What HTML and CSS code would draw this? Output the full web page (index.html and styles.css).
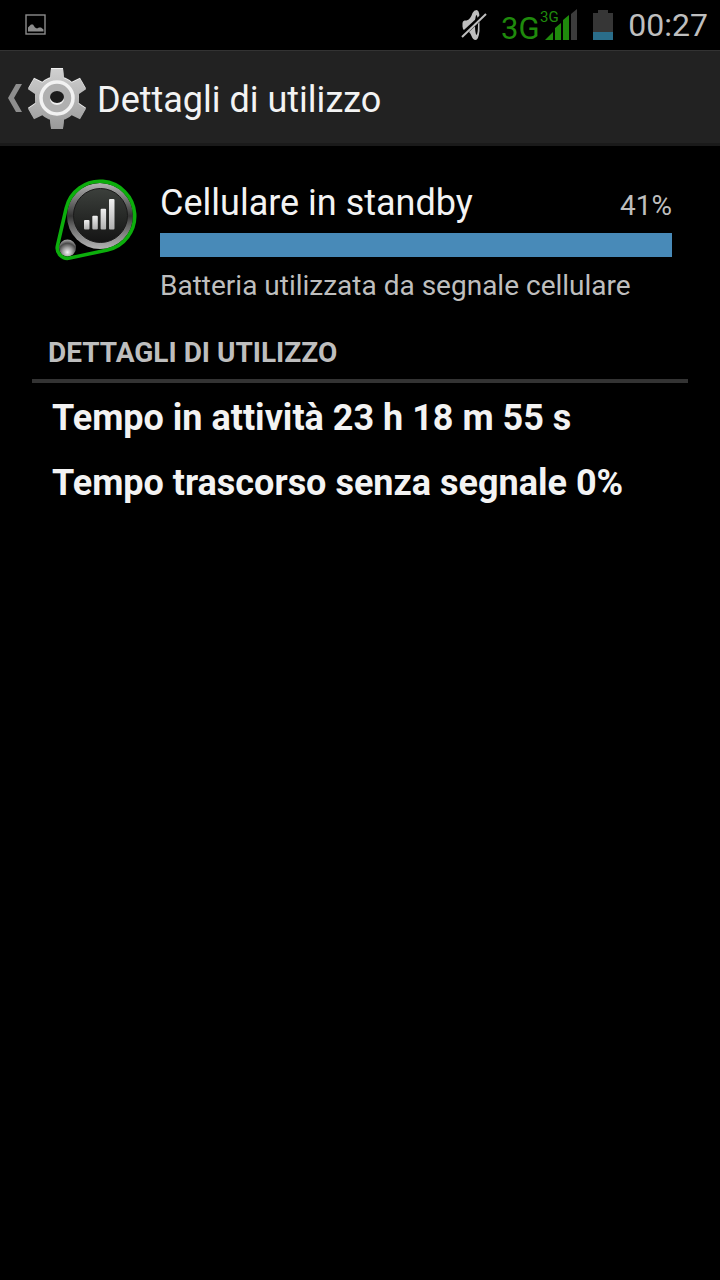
FILE: index.html
```
<!DOCTYPE html>
<html lang="it">
<head>
    <meta charset="UTF-8">
    <meta name="viewport" content="width=device-width, initial-scale=1.0">
    <title>Dettagli di utilizzo</title>
    <link rel="stylesheet" href="styles.css">
</head>
<body>
<div class="status-bar">
    <svg class="status-picture" width="22" height="22" viewBox="0 0 22 22">
        <rect x="1" y="1" width="19" height="19" fill="none" stroke="#8c8c8c" stroke-width="1.400"/>
        <path d="M3 17.500v-4l2-2 1-1h2l2 3 2 1 2-1h2l2.500 2v2z" fill="#8c8c8c"/>
    </svg>
    <div class="status-icons">
        <svg class="status-mute" width="26" height="32" viewBox="0 0 26 32">
            <path d="M1.500 14q0-2 2-2.500h2q4-1 6-7.500 1.500-3 4-3 2.500 0 3 6v15q-1 9-4 9-2.500 0-4-4-2-5-5-5.500H3.500q-2-1-2-4z" fill="#bebebe"/>
            <ellipse cx="15.500" cy="16" rx="1.500" ry="10" fill="#000"/>
            <path d="M0 27L25 4" stroke="#000" stroke-width="5"/>
            <path d="M1 28L25 5" stroke="#bebebe" stroke-width="2"/>
        </svg>
        <svg class="status-signal" width="76" height="34" viewBox="0 0 76 34">
            <text class="network-large" x="-1" y="31">3G</text>
            <text class="network-small" x="38" y="14">3G</text>
            <path d="M43 32l8-8v8zM53 32V20l6-5v17zM61 32V12l6-5v25z" fill="#1f8a0c"/>
            <path d="M69 32V6l6-5v31z" fill="#3c3c3c"/>
        </svg>
        <svg class="status-battery" width="20" height="32" viewBox="0 0 20 32">
            <path d="M5 1h10v3h5v19H0V4h5z" fill="#363636"/>
            <path d="M0 23h20v8H0z" fill="#2a6d8a"/>
        </svg>
        <span class="clock">00:27</span>
    </div>
</div>

<header class="action-bar">
    <a class="up-link" href="#" aria-label="Indietro">
        <svg width="14" height="28" viewBox="0 0 14 28">
            <path d="M8 0h6L6 14l8 14H8L0 14z" fill="#8e8e8e"/>
        </svg>
        <svg class="gear" width="64" height="64" viewBox="0 0 64 64">
            <defs>
                <linearGradient id="metal" x1="0" y1="0" x2="0" y2="1">
                    <stop offset="0" stop-color="#d2d2d2"/>
                    <stop offset="1" stop-color="#989898"/>
                </linearGradient>
                <g id="teeth">
                    <path id="tooth" d="M26 2h12l1 12H25z"/>
                    <use href="#tooth" transform="rotate(60 32 32)"/>
                    <use href="#tooth" transform="rotate(120 32 32)"/>
                    <use href="#tooth" transform="rotate(180 32 32)"/>
                    <use href="#tooth" transform="rotate(240 32 32)"/>
                    <use href="#tooth" transform="rotate(300 32 32)"/>
                </g>
                <mask id="cog">
                    <g fill="#fff">
                        <use href="#teeth"/>
                        <circle cx="32" cy="32" r="22"/>
                    </g>
                </mask>
            </defs>
            <rect width="64" height="64" fill="#f0f0f0" mask="url(#cog)"/>
            <g transform="translate(0 1)">
                <rect width="64" height="64" fill="url(#metal)" mask="url(#cog)"/>
            </g>
            <circle cx="32" cy="32" r="16" fill="#b0b0b0" stroke="#f2f2f2" stroke-width="3.500"/>
            <ellipse cx="32" cy="33" rx="7" ry="6" fill="#eee"/>
            <ellipse cx="32" cy="31" rx="7" ry="6" fill="#1c1c1c"/>
        </svg>
    </a>
    <h1>Dettagli di utilizzo</h1>
</header>

<main>
    <section class="summary">
        <svg class="standby-icon" width="96" height="96" viewBox="0 0 96 96">
            <defs>
                <linearGradient id="ring" x1="0" y1="0" x2="0" y2="1">
                    <stop offset="0" stop-color="#b4b4b4"/>
                    <stop offset=".4" stop-color="#505050"/>
                    <stop offset=".5" stop-color="#343434"/>
                    <stop offset=".65" stop-color="#666"/>
                    <stop offset="1" stop-color="#b4b4b4"/>
                </linearGradient>
                <linearGradient id="face" x1="0" y1="0" x2="0" y2="1">
                    <stop offset="0" stop-color="#3c403c"/>
                    <stop offset="1" stop-color="#141414"/>
                </linearGradient>
                <linearGradient id="bars" x1="0" y1="0" x2="0" y2="1">
                    <stop offset="0" stop-color="#f0f0f0"/>
                    <stop offset="1" stop-color="#b0b0b0"/>
                </linearGradient>
                <radialGradient id="knob" cx=".5" cy=".75" r=".7">
                    <stop offset="0" stop-color="#f4f4f4"/>
                    <stop offset=".4" stop-color="#a0a0a0"/>
                    <stop offset=".75" stop-color="#4a4a4a"/>
                    <stop offset="1" stop-color="#999"/>
                </radialGradient>
            </defs>
            <circle cx="52" cy="44" r="33" fill="url(#ring)"/>
            <circle cx="52.500" cy="43.500" r="27" fill="url(#face)" stroke="#1a1a1a"/>
            <g fill="url(#bars)">
                <rect x="36" y="48" width="5.500" height="9.500" rx="1"/>
                <rect x="44.300" y="43.700" width="5.500" height="13.800" rx="1"/>
                <rect x="52.600" y="36.700" width="5.500" height="20.800" rx="1"/>
                <rect x="61" y="27" width="5.500" height="30.500" rx="1"/>
            </g>
            <circle cx="19.500" cy="76" r="8.500" fill="url(#knob)"/>
            <path d="M18.200 36.100A34.700 34.700 0 1 1 59.400 77.900L21.700 86.100A10.300 10.300 0 0 1 9.500 73.700Z" fill="none" stroke="#0cae0c" stroke-width="3.600"/>
        </svg>
        <div class="summary-body">
            <div class="summary-head">
                <h2>Cellulare in standby</h2>
                <span class="percent">41%</span>
            </div>
            <div class="usage-bar"></div>
            <p class="description">Batteria utilizzata da segnale cellulare</p>
        </div>
    </section>

    <section class="details">
        <h3>Dettagli di utilizzo</h3>
        <ul>
            <li>Tempo in attività 23 h 18 m 55 s</li>
            <li>Tempo trascorso senza segnale 0%</li>
        </ul>
    </section>
</main>
</body>
</html>
```
FILE: styles.css
```
body {
    margin: 0;
    min-height: 100vh;
    background-color: #000;
    color: #f3f3f3;
    font-family: Roboto, "Liberation Sans", sans-serif;
}
h1, h2, h3, p, ul {
    margin: 0;
    padding: 0;
    font-weight: normal;
}
svg {
    display: block;
    flex: none;
    overflow: visible;
}
.status-bar {
    display: flex;
    justify-content: space-between;
    align-items: center;
    height: 50px;
    padding: 0 12px 0 25px;
}
.status-icons {
    display: flex;
    align-items: center;
    gap: 15px;
}
.network-large,
.network-small {
    fill: #1f8a0c;
}
.network-large {
    font-size: 31px;
}
.network-small {
    font-size: 15px;
}
.clock {
    font-size: 32px;
    line-height: 50px;
    color: #bebebe;
}
.action-bar {
    display: flex;
    align-items: center;
    box-sizing: border-box;
    height: 96px;
    padding: 2px 0 0 8px;
    background-color: #222;
    border-top: 1px solid #333;
    border-bottom: 3px solid #1a1a1a;
}
.up-link {
    display: flex;
    align-items: center;
}
.gear {
    margin: 0 8px 0 3px;
}
.action-bar h1 {
    padding-top: 4px;
    font-size: 36px;
    line-height: 42px;
}
.summary {
    display: flex;
    gap: 16px;
    padding: 26px 48px 0;
}
.summary-body {
    flex: 1;
    padding-top: 10px;
}
.summary-head {
    display: flex;
    justify-content: space-between;
    align-items: baseline;
}
.summary-head h2 {
    font-size: 36px;
    line-height: 42px;
}
.percent {
    font-size: 28px;
    color: #bebebe;
}
.usage-bar {
    height: 24px;
    margin: 9px 0 12px;
    background-color: #488ab8;
}
.description {
    font-size: 28px;
    line-height: 33px;
    color: #bebebe;
}
.details {
    margin: 34px 32px 0;
}
.details h3 {
    padding: 0 16px 10px;
    border-bottom: 4px solid #333;
    font-size: 28px;
    font-weight: bold;
    line-height: 33px;
    color: #bebebe;
    text-transform: uppercase;
}
.details ul {
    padding: 3px 20px;
    list-style: none;
}
.details li {
    font-size: 36px;
    font-weight: bold;
    line-height: 65px;
}
```
